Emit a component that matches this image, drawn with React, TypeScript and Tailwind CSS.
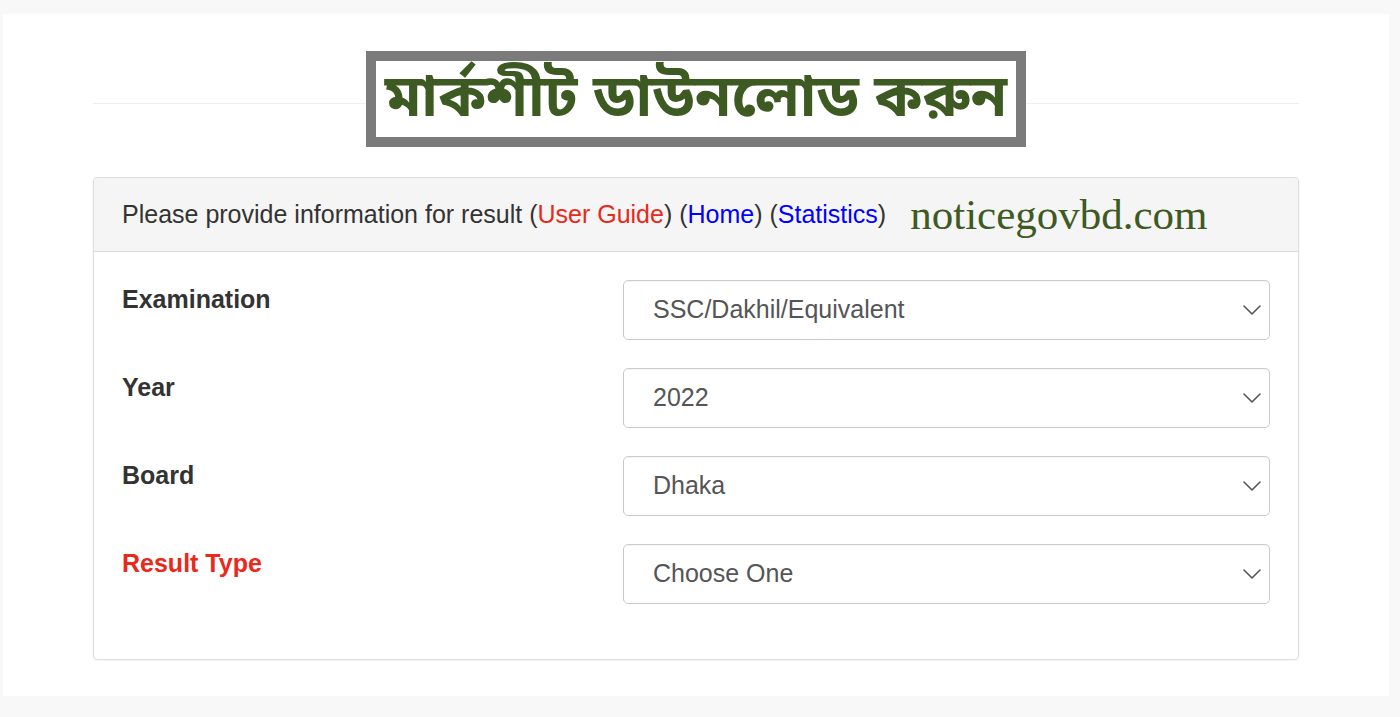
const rows = [
  { label: "Examination", value: "SSC/Dakhil/Equivalent", red: false },
  { label: "Year", value: "2022", red: false },
  { label: "Board", value: "Dhaka", red: false },
  { label: "Result Type", value: "Choose One", red: true },
];

function Chevron() {
  return (
    <svg width="18" height="10" viewBox="0 0 18 10" fill="none" className="shrink-0">
      <polyline points="1,1 9,9 17,1" stroke="#555555" strokeWidth="1.6" strokeLinecap="round" strokeLinejoin="round" />
    </svg>
  );
}

export default function App() {
  return (
    <div className="min-h-[717px] bg-[#f8f8f8] pt-[14px] pl-[3px] pr-[11px] pb-[21px] font-['Liberation_Sans',Arial,sans-serif]">
      <div className="bg-white h-[682px] px-[90px] pt-[37px]">
        {/* Title */}
        <div className="relative flex justify-center">
          <div className="absolute left-0 right-0 top-[52px] h-px bg-[#eeeeee]" />
          <div className="relative border-[10px] border-[#7b7b7b] bg-white h-[96px] w-[660px] flex items-center justify-center">
            <h1 className="text-[#3e5a23] text-[59px] font-bold leading-none pt-[4px] font-['Noto_Sans_Bengali','Noto_Sans',sans-serif]">
              মার্কশীট ডাউনলোড করুন
            </h1>
          </div>
        </div>

        {/* Panel */}
        <div className="mt-[30px] border border-[#dddddd] rounded-[4px] shadow-[0_1px_2px_rgba(0,0,0,0.05)]">
          <div className="bg-[#f5f5f5] h-[74px] border-b border-[#dddddd] rounded-t-[4px] flex items-center pl-[28px] pt-[1px]">
            <span className="text-[25px] text-[#333333]">
              Please provide information for result (
              <span className="text-[#e8291c]">User Guide</span>) (
              <span className="text-[#0000ff]">Home</span>) (
              <span className="text-[#0000ff]">Statistics</span>)
            </span>
            <span className="ml-[24px] text-[43px] text-[#3e5a23] leading-none font-['Liberation_Serif','Times_New_Roman',serif] -mt-[2px]">
              noticegovbd.com
            </span>
          </div>

          <div className="px-[28px] pt-[28px] pb-[55px] flex flex-col gap-[28px]">
            {rows.map((r) => (
              <div key={r.label} className="flex">
                <div
                  className={`w-[501px] pt-[1px] text-[25px] font-bold ${
                    r.red ? "text-[#e8291c]" : "text-[#333333]"
                  }`}
                >
                  {r.label}
                </div>
                <div className="flex-1 h-[60px] border border-[#cccccc] rounded-[5px] bg-white flex items-center pl-[29px] pr-[8px] shadow-[inset_0_1px_1px_rgba(0,0,0,0.04)]">
                  <span className="flex-1 text-[25px] text-[#555555]">{r.value}</span>
                  <Chevron />
                </div>
              </div>
            ))}
          </div>
        </div>
      </div>
    </div>
  );
}
